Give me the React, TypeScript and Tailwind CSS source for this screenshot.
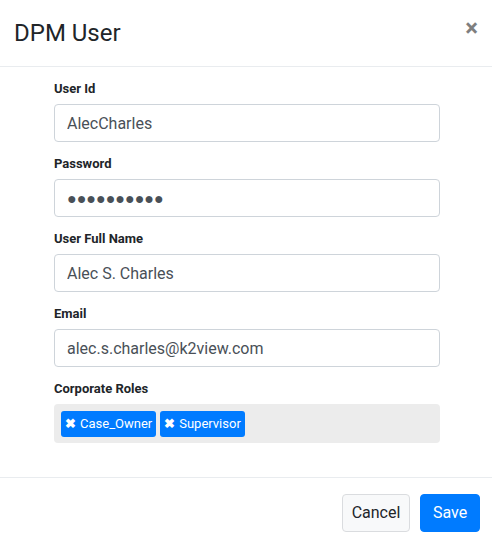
import React from 'react';

const Field = ({ label, value }: { label: string; value: string }) => (
  <div className="mb-3">
    <label className="block text-[13px] leading-[20px] font-bold text-[#212529] mb-[5px]">{label}</label>
    <input
      type="text"
      readOnly
      value={value}
      className="block w-full h-[38px] px-3 text-base text-[#495057] bg-white border border-[#ced4da] rounded outline-none"
    />
  </div>
);

const Tag = ({ name }: { name: string }) => (
  <span className="inline-flex items-center gap-1 h-[26px] px-1 bg-[#007bff] text-white text-[13px] rounded-[3px]">
    <span className="font-bold text-[13px]">✖</span>
    {name}
  </span>
);

export default function App() {
  return (
    <div className="w-[492px] h-[545px] bg-white font-['Roboto',sans-serif] text-[#212529] flex flex-col">
      {/* Header */}
      <div className="h-[67px] border-b border-[#e9ecef] flex items-center justify-between pl-[14px] pr-[14px] shrink-0">
        <h2 className="text-2xl font-normal leading-none">DPM User</h2>
        <button className="text-[24px] font-bold leading-none text-black opacity-50 self-start mt-4">×</button>
      </div>

      {/* Body */}
      <div className="pt-3 pl-[54px] pr-[52px] pb-[18px] flex-1">
        <Field label="User Id" value="AlecCharles" />
        <Field label="Password" value="●●●●●●●●●●" />
        <Field label="User Full Name" value="Alec S. Charles" />
        <Field label="Email" value="alec.s.charles@k2view.com" />
        <div>
          <label className="block text-[13px] leading-[20px] font-bold text-[#212529] mb-[5px]">Corporate Roles</label>
          <div className="h-[39px] bg-[#ececec] rounded flex items-center gap-1 px-[7px]">
            <Tag name="Case_Owner" />
            <Tag name="Supervisor" />
          </div>
        </div>
      </div>

      {/* Footer */}
      <div className="border-t border-[#e9ecef] flex justify-end items-start gap-[10px] pt-4 pb-[13px] pr-3 shrink-0">
        <button className="h-[38px] w-[68px] text-base text-[#212529] bg-[#f8f9fa] border border-[#dadcdf] rounded">Cancel</button>
        <button className="h-[38px] w-[60px] text-base text-white bg-[#007bff] border border-[#007bff] rounded">Save</button>
      </div>
    </div>
  );
}
